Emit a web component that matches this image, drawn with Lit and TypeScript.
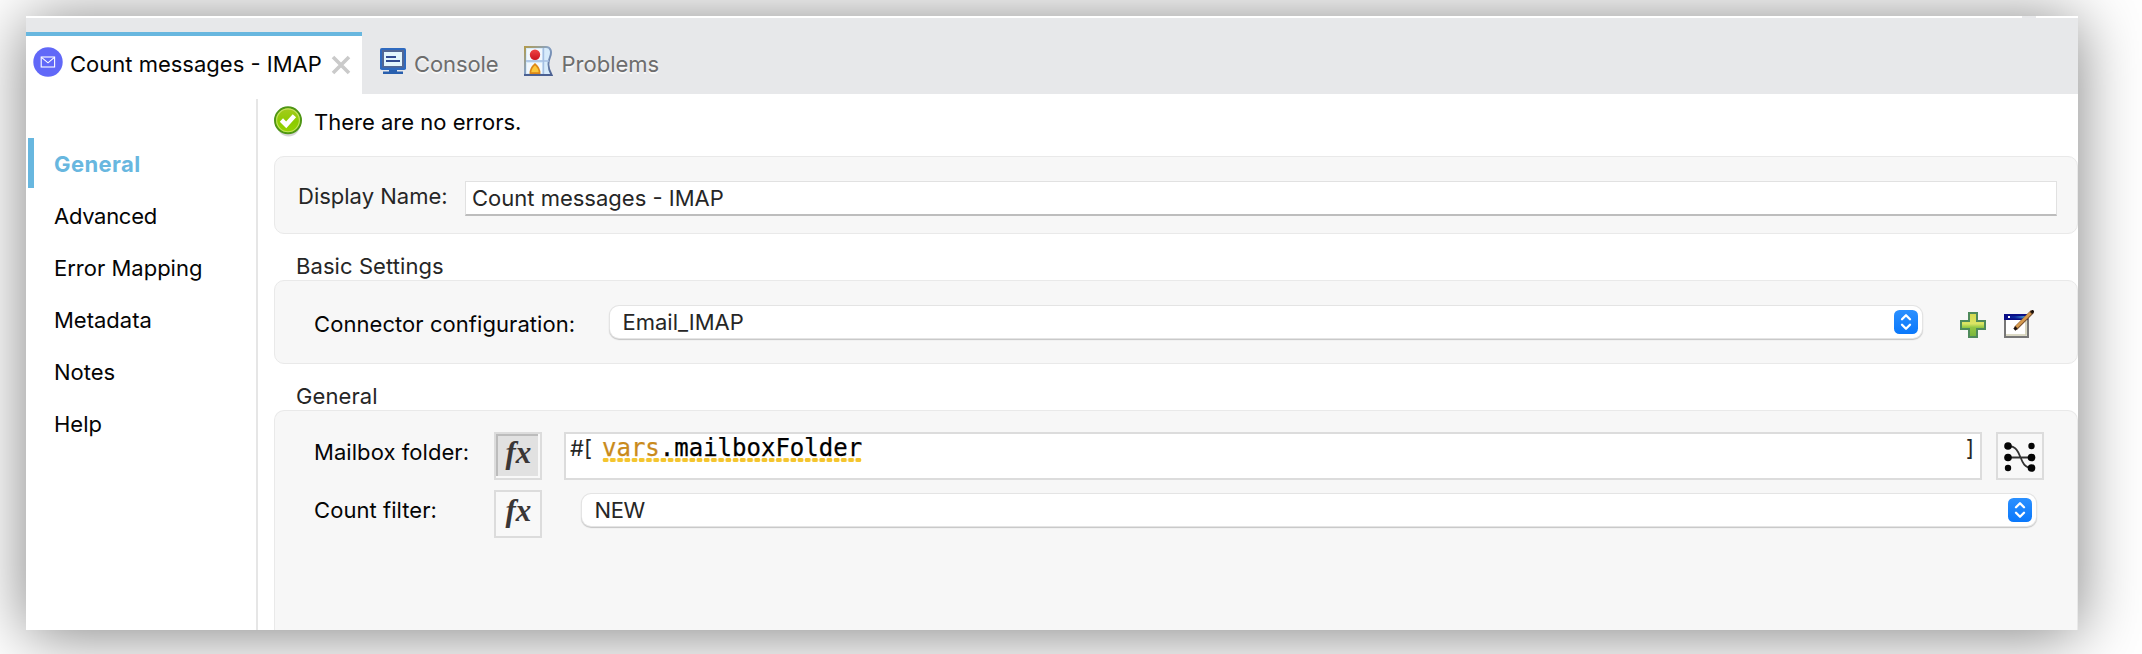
import { LitElement, html, css, svg } from "lit";
import { customElement, property, state } from "lit/decorators.js";
import { classMap } from "lit/directives/class-map.js";

const stepper = html`<svg class="stepper" width="24" height="24" viewBox="0 0 24 24">
  <defs><linearGradient id="b" x1="0" y1="0" x2="0" y2="1"><stop offset="0" stop-color="#2b90ff"/><stop offset="1" stop-color="#0a78fb"/></linearGradient></defs>
  <rect width="24" height="24" rx="5.5" fill="url(#b)"/>
  <path d="M8 9.3 12 5.3 16 9.3M8 14.7 12 18.7 16 14.7" fill="none" stroke="#fff" stroke-width="2.3" stroke-linecap="round" stroke-linejoin="round"/></svg>`;

const mailIcon = html`<svg width="30" height="30" viewBox="0 0 30 30"><circle cx="15" cy="15" r="14.7" fill="#6168f8"/>
  <rect x="8.2" y="10" width="13.4" height="10" fill="none" stroke="#fff" stroke-width="1.1"/>
  <path d="M8.5 10.3 15 15.8 21.4 10.3" fill="none" stroke="#fff" stroke-width="1.1"/></svg>`;

const closeIcon = html`<svg width="20" height="20" viewBox="0 0 20 20"><path d="M2 2 18 18M18 2 2 18" stroke="#cacaca" stroke-width="3.6"/></svg>`;

const consoleIcon = html`<svg width="26" height="26" viewBox="0 0 26 26">
  <rect width="26" height="22" rx="1.8" fill="#2f6abf"/><rect x="2" y="2" width="22" height="17.6" fill="#526794"/>
  <rect x="4" y="4" width="18" height="14" fill="#e3f5fc"/><path d="M6 9h10M6 13h14" stroke="#314b91" stroke-width="1.8"/>
  <path d="M9 22h8v1.6h6V26H3v-2.4h6z" fill="#285fae"/></svg>`;

const problemsIcon = html`<svg width="29" height="30" viewBox="0 0 29 30">
  <defs><linearGradient id="pb" x1="0" y1="0" x2="1" y2="1"><stop offset="0" stop-color="#b19b50"/><stop offset=".45" stop-color="#88a2c4"/><stop offset="1" stop-color="#4c6192"/></linearGradient>
  <linearGradient id="pr" x1="0" y1="0" x2="0" y2="1"><stop offset="0" stop-color="#f04545"/><stop offset="1" stop-color="#c9131f"/></linearGradient></defs>
  <path d="M1 1H22C27 1 28 6 26 11S23 21 27.6 29H1z" fill="#d7ebfb" stroke="url(#pb)" stroke-width="2"/>
  <path d="M2 15H25M19.4 2V28" stroke="#a5bfe2" stroke-width="1.6"/><path d="M3 3H18V14H3zM3 17H18V27H3z" fill="#f2f8fd"/>
  <circle cx="11" cy="8.8" r="5.2" fill="url(#pr)"/><path d="M11 18.2C14 20.8 15.6 23.4 15.6 27.2H6.4C6.4 23.4 8 20.8 11 18.2z" fill="#fbc73b" stroke="#dc8718" stroke-width="1.7"/>
  <path d="M0 29H28" stroke="#4b6092" stroke-width="2"/></svg>`;

const okIcon = html`<svg width="30" height="32" viewBox="0 0 30 32"><defs><linearGradient id="ok" x1="0" y1="0" x2="0" y2="1"><stop offset="0" stop-color="#a7cc20"/><stop offset=".55" stop-color="#8ccb00"/><stop offset="1" stop-color="#95d500"/></linearGradient></defs>
  <ellipse cx="14.5" cy="17.5" rx="12" ry="13" fill="#000" opacity=".16"/>
  <circle cx="14" cy="14.3" r="13" fill="url(#ok)" stroke="#4f9614" stroke-width="2"/><circle cx="14" cy="14.3" r="11.4" fill="none" stroke="#d2e878" stroke-width="1.1" opacity=".75"/>
  <path d="M7.4 14 12.2 18.8 20.4 9.8" fill="none" stroke="#fff" stroke-width="4.6"/></svg>`;

const plusIcon = html`<svg width="26" height="26" viewBox="0 0 26 26"><defs><linearGradient id="pl" x1="0" y1="0" x2="0" y2="1"><stop offset="0" stop-color="#d3d84c"/><stop offset=".45" stop-color="#dbe565"/><stop offset=".6" stop-color="#92c844"/><stop offset="1" stop-color="#78b43c"/></linearGradient></defs>
  <path d="M9 1H17V9H25V17H17V25H9V17H1V9H9z" fill="url(#pl)" stroke="#4f8a5b" stroke-width="2"/></svg>`;

const editIcon = html`<svg width="30" height="28" viewBox="0 0 30 28"><rect x="1" y="5" width="23" height="22" fill="#fff" stroke="#777" stroke-width="2"/>
  <path d="M2 25H22V10" fill="none" stroke="#cfcdb2" stroke-width="1.6"/>
  <defs><linearGradient id="ed"><stop offset="0" stop-color="#0a0f8c"/><stop offset=".45" stop-color="#0b2aa0"/><stop offset="1" stop-color="#4a9cd0"/></linearGradient></defs>
  <rect y="4" width="24" height="6" fill="#0a0f86"/><rect x="2" y="6" width="20" height="2.4" fill="url(#ed)"/><rect x="4" y="6" width="2" height="2" fill="#fff"/>
  <path d="M11.5 18.5 28.5 1.5" stroke="#7a5230" stroke-width="4"/><path d="M12.5 17 26.5 3" stroke="#d69a4c" stroke-width="2.6"/>
  <path d="M10.4 19.6 12.4 17.6M27.4 2.8 29.6.6" stroke="#1c120c" stroke-width="3"/></svg>`;

const mapIcon = html`<svg width="32" height="31" viewBox="0 0 32 31"><path d="M4 4C20 4 13 26 28 26M4 15.5H28" fill="none" stroke="#333" stroke-width="1.8"/>
  ${[[4, 4], [4, 15.5], [4, 26], [27.5, 4], [27.5, 15.5], [27.5, 26]].map(([x, y]) => svg`<circle cx=${x} cy=${y} r=${(x === 4 && y === 26) || (x !== 4 && y === 4) ? 3.2 : 3.8} fill="#050505"/>`)}
  </svg>`;

@customElement("select-box")
export class SelectBox extends LitElement {
  @property() value = "";
  static styles = css`
    :host { display: flex; align-items: center; height: 32px; box-sizing: border-box; padding: 0 4px 0 12.5px; border-radius: 9px; background: #fff;
      box-shadow: 0 0 0 1px #e4e4e4, 0 1px 1px 1px #c4c4c4; color: #262626; }
    .value { flex: 1; line-height: 30px; margin-top: -1px; }
    .stepper { display: block; }
  `;
  render() { return html`<span class="value">${this.value}</span>${stepper}`; }
}

@customElement("fx-button")
export class FxButton extends LitElement {
  @property({ type: Boolean, reflect: true }) pressed = false;
  static styles = css`
    :host { display: block; box-sizing: border-box; width: 48px; height: 48px; border: 2px solid #dcdcdc; background: #f8f8f8; }
    .face { box-sizing: border-box; width: 42px; height: 42px; padding-left: 7.5px; color: #3a3636; font: italic bold 31px/33px "Liberation Serif", serif; border: solid transparent; border-width: 2px 0 0 2px; }
    :host([pressed]) .face { border-color: #bcbcbc; background: #e1e1e1; }
  `;
  render() { return html`<div class="face">fx</div>`; }
}

@customElement("app-root")
export class AppRoot extends LitElement {
  @state() private section = "General";
  private sections = ["General", "Advanced", "Error Mapping", "Metadata", "Notes", "Help"];

  static styles = css`
    :host { display: block; box-sizing: border-box; width: 2142px; height: 654px; padding: 16px 64px 24px 26px; overflow: hidden; background: #fff;
      font: 22px/26px Inter, sans-serif; color: #050505; white-space: nowrap; }
    svg { display: block; flex: none; }
    .window { height: 614px; display: flex; flex-direction: column; background: #fff; box-shadow: 0 4px 60px rgba(0, 0, 0, .5); }
    .edge { height: 2px; flex: none; display: flex; justify-content: flex-end; padding-right: 42px; }
    .notch { width: 14px; background: #e7e8ea; }
    .tabs { height: 76px; flex: none; display: flex; background: #e7e8ea; }
    .tab { display: flex; box-sizing: border-box; margin-top: 14px; height: 62px; padding-top: 4px; align-items: center; color: #6d6d6d; text-shadow: 0 2px 0 #f8f8f8; }
    .tab.active { width: 336px; border-top: 4px solid #68b7df; padding: 0 0 6px 7px; background: #fff; color: #050505; text-shadow: none; }
    .tab.active .label { margin: 3px 9px 0 7px; }
    .tab.active svg:last-child { margin-top: 6px; }
    .console { padding: 0 0 4px 18px; gap: 8px; letter-spacing: -.1px; }
    .problems { padding: 0 0 4px 25px; gap: 9px; }
    .console .label, .problems .label { padding-top: 6px; }
    .body { flex: 1; min-height: 0; display: flex; }
    .nav { width: 230px; box-sizing: border-box; padding: 44px 0 0 2px; }
    .item { height: 50px; margin-bottom: 2px; box-sizing: border-box; border-left: 6px solid transparent; padding: 13px 0 0 20px; line-height: 26px; }
    .item:nth-child(2) { letter-spacing: -.3px; }
    .item.on { border-color: #68b7df; color: #68b7df; font-weight: 700; letter-spacing: .4px; }
    .rule { width: 2px; margin-top: 5px; background: #e6e6e6; }
    .main { flex: 1; min-width: 0; padding-left: 16px; display: flex; flex-direction: column; }
    .status { display: flex; height: 62px; box-sizing: border-box; padding-top: 12px; gap: 10px; }
    .status .label { padding-top: 3px; }
    .card { box-sizing: border-box; background: #f7f7f7; border: 1px solid #e9e9e9; border-radius: 10px; display: flex; flex: none; }
    .name { height: 78px; padding: 24px 20px 0 23px; }
    .name .label { width: 167px; padding-top: 2px; color: #262626; }
    .input { flex: 1; height: 35px; box-sizing: border-box; border: 1px solid #e1e1e1; border-bottom: 2px solid #bdbdbd; background: #fff; padding: 3px 6px; color: #262626; }
    .heading { height: 46px; box-sizing: border-box; padding: 19px 0 0 22px; line-height: 26px; color: #262626; letter-spacing: .08px; }
    .basic { height: 84px; padding: 25px 43px 0 39px; }
    .basic .label { width: 296px; padding-top: 5px; letter-spacing: .06px; }
    .basic select-box { width: 1312px; }
    .basic .plus { margin: 6px 18px 0 38px; }
    .basic .edit { margin-top: 4px; }
    .general { flex: 1; flex-direction: column; border-bottom: 0; border-radius: 10px 10px 0 0; padding: 21px 0 0 39px; gap: 10px; }
    .row { display: flex; height: 48px; }
    .row .label { width: 180px; padding-top: 7px; letter-spacing: .06px; }
    .editor { box-sizing: border-box; width: 1418px; height: 48px; margin: 0 14px 0 22px; border: 2px solid #dcdcdc; background: #fff; display: flex; padding: 1px 6px 0 4px; color: #262626; }
    .open { width: 32px; }
    .code { flex: 1; }
    .expr { display: inline-block; height: 27px; font: 24px/26px "DejaVu Sans Mono", monospace; color: #000; -webkit-text-stroke: .25px; background: radial-gradient(ellipse 3.3px 2.4px at 50% 50%, #f4c52e 90%, transparent) 0 100% / 7.22px 4px repeat-x; }
    .kw { color: #c98a1b; }
    .map { box-sizing: border-box; width: 48px; height: 48px; border: 2px solid #dcdcdc; background: #f8f8f8; padding: 8px 6px; }
    .row select-box { width: 1454px; margin: 4px 0 0 40px; letter-spacing: -.4px; }
  `;

  render() {
    return html`<div class="window">
      <div class="edge"><div class="notch"></div></div>
      <div class="tabs">
        <div class="tab active">${mailIcon}<span class="label">Count messages - IMAP</span>${closeIcon}</div>
        <div class="tab console">${consoleIcon}<span class="label">Console</span></div>
        <div class="tab problems">${problemsIcon}<span class="label">Problems</span></div>
      </div>
      <div class="body">
        <div class="nav">${this.sections.map((s) => html`<div class=${classMap({ item: true, on: s === this.section })} @click=${() => (this.section = s)}>${s}</div>`)}</div>
        <div class="rule"></div>
        <div class="main">
          <div class="status">${okIcon}<span class="label">There are no errors.</span></div>
          <div class="card name"><span class="label">Display Name:</span><div class="input">Count messages - IMAP</div></div>
          <div class="heading">Basic Settings</div>
          <div class="card basic"><span class="label">Connector configuration:</span><select-box value="Email_IMAP"></select-box><div class="plus">${plusIcon}</div><div class="edit">${editIcon}</div></div>
          <div class="heading">General</div>
          <div class="card general">
            <div class="row"><span class="label">Mailbox folder:</span><fx-button pressed></fx-button>
              <div class="editor"><span class="open">#[</span><span class="code"><span class="expr"><span class="kw">vars</span>.mailboxFolder</span></span><span>]</span></div>
              <div class="map">${mapIcon}</div></div>
            <div class="row"><span class="label">Count filter:</span><fx-button></fx-button><select-box value="NEW"></select-box></div>
          </div>
        </div>
      </div>
    </div>`;
  }
}
